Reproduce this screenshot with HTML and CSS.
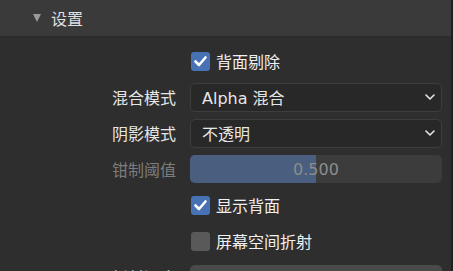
FILE: index.html
```html
<!DOCTYPE html>
<html lang="zh">
<head>
    <meta charset="UTF-8">
    <title>设置</title>
    <link rel="stylesheet" href="styles.css">
</head>
<body>
    <div class="panel">
        <div class="panel-header">
            <span class="arrow"></span>
            <span class="title">设置</span>
        </div>
        <div class="panel-body">
            <div class="row">
                <span class="label"></span>
                <label class="check">
                    <span class="box on">
                        <svg width="19" height="19" viewBox="0 0 19 19"><polyline points="4.5,9.5 8,13 14.5,5.5" fill="none" stroke="#fff" stroke-width="2.6" stroke-linecap="round" stroke-linejoin="round"/></svg>
                    </span>
                    背面剔除
                </label>
            </div>
            <div class="row">
                <span class="label">混合模式</span>
                <div class="dropdown">
                    <span>Alpha 混合</span>
                    <svg class="chev" width="10" height="6" viewBox="0 0 10 6"><polyline points="1,1 5,5 9,1" fill="none" stroke="#e6e6e6" stroke-width="1.6" stroke-linecap="round" stroke-linejoin="round"/></svg>
                </div>
            </div>
            <div class="row">
                <span class="label">阴影模式</span>
                <div class="dropdown">
                    <span>不透明</span>
                    <svg class="chev" width="10" height="6" viewBox="0 0 10 6"><polyline points="1,1 5,5 9,1" fill="none" stroke="#e6e6e6" stroke-width="1.6" stroke-linecap="round" stroke-linejoin="round"/></svg>
                </div>
            </div>
            <div class="row disabled">
                <span class="label">钳制阈值</span>
                <div class="slider">
                    <div class="fill" style="width: 50%"></div>
                    <span class="value">0.500</span>
                </div>
            </div>
            <div class="row">
                <span class="label"></span>
                <label class="check">
                    <span class="box on">
                        <svg width="19" height="19" viewBox="0 0 19 19"><polyline points="4.5,9.5 8,13 14.5,5.5" fill="none" stroke="#fff" stroke-width="2.6" stroke-linecap="round" stroke-linejoin="round"/></svg>
                    </span>
                    显示背面
                </label>
            </div>
            <div class="row">
                <span class="label"></span>
                <label class="check">
                    <span class="box"></span>
                    屏幕空间折射
                </label>
            </div>
            <div class="row">
                <span class="label">折射深度</span>
                <div class="field"></div>
            </div>
        </div>
    </div>
</body>
</html>
```

FILE: styles.css
```css
body {
    margin: 0;
    width: 453px;
    height: 271px;
    overflow: hidden;
    background: #2e2e2e;
    font-family: 'DejaVu Sans', 'Noto Sans CJK SC', sans-serif;
    font-size: 16px;
    color: #e6e6e6;
}
.panel {
    border-right: 2px solid #1f1f1f;
    height: 100%;
}
.panel-header {
    height: 36px;
    background: #3a3a3a;
    display: flex;
    align-items: center;
    padding-left: 33px;
    box-shadow: 0 1px 0 #2a2a2a;
}
.arrow {
    width: 0;
    height: 0;
    border-left: 4.5px solid transparent;
    border-right: 4.5px solid transparent;
    border-top: 8px solid #9a9a9a;
    margin-right: 10px;
}
.title {
    color: #e0e0e0;
}
.panel-body {
    padding-top: 7px;
}
.row {
    display: grid;
    grid-template-columns: 176px 252px;
    column-gap: 14px;
    height: 36px;
    align-items: center;
}
.label {
    text-align: right;
    white-space: nowrap;
}
.disabled .label {
    color: #7c7c7c;
}
.check {
    display: flex;
    align-items: center;
    gap: 6px;
    padding-left: 1px;
    color: #f0f0f0;
}
.box {
    width: 19px;
    height: 19px;
    border-radius: 3px;
    background: #595959;
    display: flex;
}
.box.on {
    background: #4772b3;
}
.dropdown {
    height: 27px;
    background: #282828;
    border: 1px solid #3d3d3d;
    border-radius: 5px;
    display: flex;
    align-items: center;
    justify-content: space-between;
    padding: 0 6px 0 11px;
}
.slider {
    position: relative;
    height: 28px;
    background: #3c3c3c;
    border-radius: 5px;
    overflow: hidden;
    display: flex;
    align-items: center;
    justify-content: center;
}
.fill {
    position: absolute;
    left: 0;
    top: 0;
    bottom: 0;
    background: #4a5f80;
}
.value {
    position: relative;
    color: #8c8c8c;
}
.field {
    height: 29px;
    margin-top: 5px;
    background: #4a4a4a;
    border-radius: 5px;
}
```
